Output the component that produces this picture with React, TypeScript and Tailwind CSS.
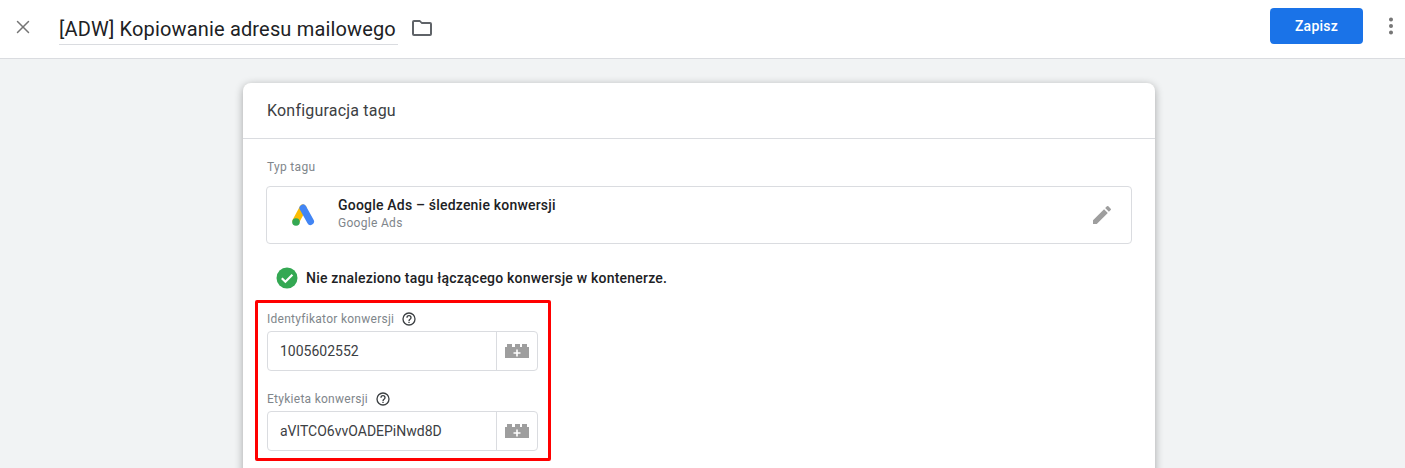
import { MoreVertical, X } from 'lucide-react';

const AdsLogo = () => (
  <svg width="24" height="24" viewBox="0 0 24 24" className="block">
    <path d="M12 5 5 18" stroke="#fbbc04" strokeWidth="7" strokeLinecap="round" />
    <path d="M12 5 19.500 18.500" stroke="#4285f4" strokeWidth="7" strokeLinecap="round" />
    <circle cx="5" cy="19" r="3.800" fill="#34a853" />
  </svg>
);

const BrickIcon = () => (
  <svg width="24" height="14" viewBox="0 0 24 14" className="block">
    <path d="M0 3h2V0h5v3h3V0h5v3h2V0h5v3h2v11H0z" fill="#9e9e9e" />
    <path d="M11.200 5.500h1.600v2.700h2.700v1.600h-2.700v2.700h-1.600V9.800H8.500V8.200h2.700z" fill="#fff" />
  </svg>
);

const HelpIcon = () => (
  <svg width="16" height="16" viewBox="0 0 24 24" fill="#3c4043" className="block">
    <path d="M12 2a10 10 0 1 0 0 20 10 10 0 0 0 0-20zm0 18a8 8 0 1 1 0-16 8 8 0 0 1 0 16zm-1-4h2v2h-2zm1-10a4 4 0 0 0-4 4h2a2 2 0 1 1 4 0c0 2-3 1.750-3 5h2c0-2.250 3-2.500 3-5a4 4 0 0 0-4-4z" />
  </svg>
);

const Field = ({ label, value }: { label: string; value: string }) => (
  <div className="w-[271px]">
    <div className="flex h-[16px] items-center gap-[7px] text-[12px] tracking-[0.27px] text-[#80868b]">
      <span>{label}</span>
      <HelpIcon />
    </div>
    <div className="mt-[4px] flex h-[40px] rounded-[4px] border border-[#dadce0]">
      <div className="flex flex-1 items-center pl-[12px] text-[14px] text-[#3c4043]">{value}</div>
      <div className="flex w-[41px] items-center justify-center border-l border-[#dadce0]">
        <BrickIcon />
      </div>
    </div>
  </div>
);

export default function App() {
  return (
    <div className="h-[468px] overflow-hidden bg-[#f1f3f4] font-['Roboto',sans-serif]">
      <header className="flex h-[59px] items-center border-b border-[#dadce0] bg-white pb-[6px]">
        <button className="mt-[2px] ml-[11px] flex h-[24px] w-[24px] items-center justify-center text-[#757575]">
          <X size={22} strokeWidth={1.6} />
        </button>
        <div className="mt-[7px] ml-[24px] flex h-[31px] w-[339px] items-center border-b border-[#dadce0] text-[20px] tracking-[0.16px] whitespace-nowrap text-[#202124]">
          [ADW] Kopiowanie adresu mailowego
        </div>
        <svg width="24" height="24" viewBox="0 0 24 24" fill="#5f6368" className="mt-[4px] ml-[12px] block">
          <path d="M9.600 6l2 2H20v10H4V6h5.600M10 4H4a2 2 0 0 0-2 2v12a2 2 0 0 0 2 2h16a2 2 0 0 0 2-2V8a2 2 0 0 0-2-2h-8l-2-2z" />
        </svg>
        <button className="ml-auto h-[36px] w-[93px] rounded-[4px] bg-[#1a73e8] text-[14px] font-medium tracking-[0.25px] text-white">
          Zapisz
        </button>
        <div className="mr-[2px] ml-[16px] flex w-[24px] justify-center text-[#757575]">
          <MoreVertical size={22} strokeWidth={2.4} />
        </div>
      </header>

      <main className="mt-[24px] ml-[243px] h-[500px] w-[912px] rounded-t-[8px] bg-white shadow-[0_2px_9px_rgba(0,0,0,0.32)]">
        <div className="flex h-[56px] items-center border-b border-[#dadce0] pl-[24px] text-[16px] tracking-[0.2px] text-[#3c4043]">
          Konfiguracja tagu
        </div>
        <div className="relative px-[23px] pt-[20px]">
          <div className="ml-px h-[16px] text-[12px] leading-[16px] tracking-[0.3px] text-[#80868b]">Typ tagu</div>
          <div className="mt-[11px] flex h-[58px] items-center rounded-[4px] border border-[#dadce0]">
            <div className="ml-[24px] w-[47px]">
              <AdsLogo />
            </div>
            <div className="flex-1 pb-[4px]">
              <div className="text-[14px] leading-[18px] font-medium tracking-[0.2px] text-[#202124]">
                Google Ads – śledzenie konwersji
              </div>
              <div className="mt-px text-[12px] leading-[16px] tracking-[0.3px] text-[#80868b]">Google Ads</div>
            </div>
            <svg width="24" height="24" viewBox="0 0 24 24" fill="#9e9e9e" className="mr-[17px] block">
              <path d="M3 17.250V21h3.750L17.810 9.940l-3.750-3.750L3 17.250zM20.710 7.040a1 1 0 0 0 0-1.410l-2.340-2.340a1 1 0 0 0-1.410 0l-1.830 1.830 3.750 3.750 1.830-1.830z" />
            </svg>
          </div>

          <div className="mt-[23px] ml-[10px] flex h-[22px] items-center gap-[8px]">
            <svg width="22" height="22" viewBox="0 0 22 22" className="block">
              <circle cx="11" cy="11" r="10.500" fill="#34a853" />
              <path d="m5.800 11.200 3.600 3.600 7-7" fill="none" stroke="#fff" strokeWidth="2.200" />
            </svg>
            <span className="text-[14px] font-medium tracking-[0.21px] text-[#202124]">
              Nie znaleziono tagu łączącego konwersje w kontenerze.
            </span>
          </div>

          <div className="mt-[22px] ml-px flex flex-col gap-[20px]">
            <Field label="Identyfikator konwersji" value="1005602552" />
            <Field label="Etykieta konwersji" value="aVlTCO6vvOADEPiNwd8D" />
          </div>

          {/* Red annotation drawn over the form */}
          <div className="pointer-events-none absolute top-[161px] left-[12px] h-[161px] w-[296px] rounded-[2px] border-[3px] border-[#ff0000]" />
        </div>
      </main>
    </div>
  );
}
